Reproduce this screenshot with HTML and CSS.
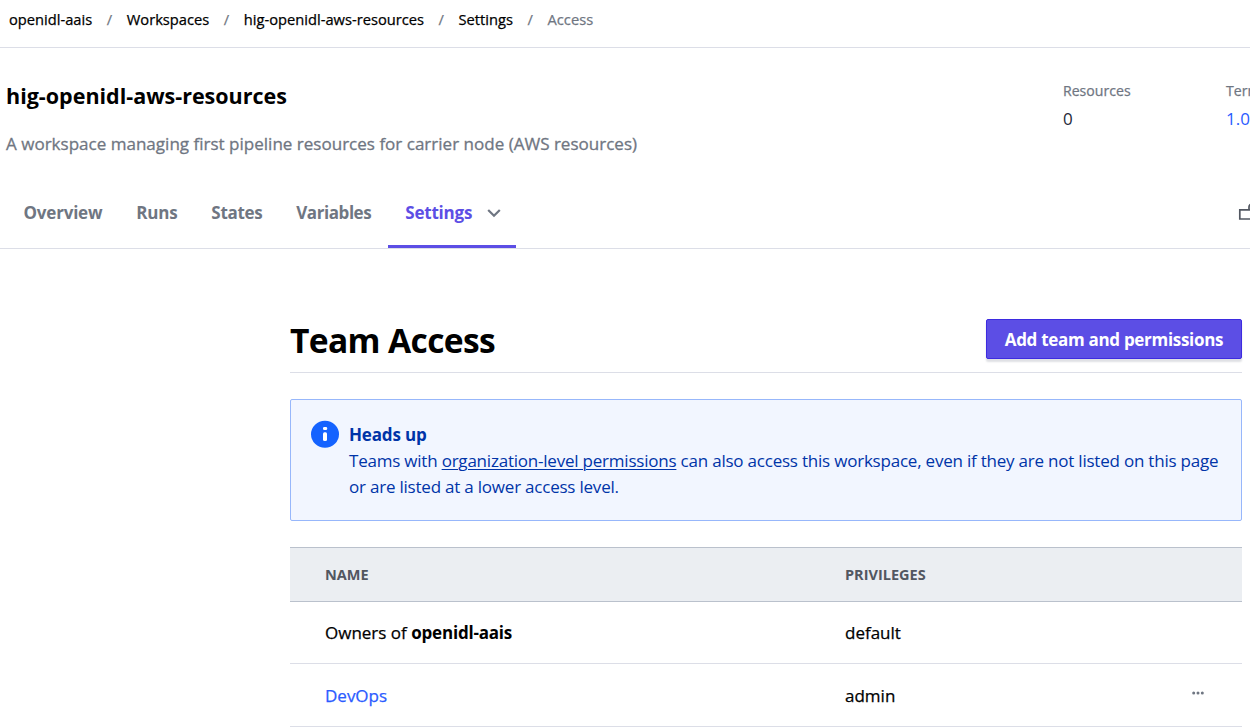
FILE: index.html
```html
<!DOCTYPE html>
<html lang="en">
<head>
<meta charset="utf-8">
<title>Team Access</title>
<link rel="stylesheet" href="styles.css">
</head>
<body>
<nav class="crumbs">
  <a>openidl-aais</a><i>/</i><a>Workspaces</a><i>/</i><a>hig-openidl-aws-resources</a><i>/</i><a>Settings</a><i>/</i><span class="current">Access</span>
</nav>
<header class="workspace">
  <div class="summary">
    <div class="intro">
      <h2>hig-openidl-aws-resources</h2>
      <p>A workspace managing first pipeline resources for carrier node (AWS resources)</p>
    </div>
    <dl class="stat"><dt>Resources</dt><dd>0</dd></dl>
    <dl class="stat"><dt>Terraform version</dt><dd class="link">1.0.2</dd></dl>
  </div>
  <div class="tabs">
    <a class="overview">Overview</a><a class="runs">Runs</a><a class="states">States</a><a class="variables">Variables</a>
    <a class="active"><span>Settings</span><svg width="14" height="10" viewBox="0 0 14 10"><path d="M1.2 2 7 7.8 12.8 2" fill="none" stroke="#6f7682" stroke-width="2.2"/></svg></a>
    <svg class="lock" width="18" height="20" viewBox="0 0 18 20"><path d="M1.8 6.8H15.2V16H1.8ZM11 6.8V4A3 3 0 0 1 17 4" fill="none" stroke="#525761" stroke-width="1.7"/></svg>
  </div>
</header>
<main>
  <div class="title">
    <h1>Team Access</h1>
    <button>Add team and permissions</button>
  </div>
  <section class="alert">
    <svg width="28" height="28" viewBox="0 0 28 28"><ellipse cx="14" cy="14.3" rx="14" ry="13.5" fill="#1563ff"/><rect x="12" y="7" width="4.2" height="3" rx="1.3" fill="#fff"/><rect x="12" y="12.3" width="4" height="8.7" rx="1.5" fill="#fff"/></svg>
    <div>
      <strong>Heads up</strong>
      <p>Teams with <a>organization-level permissions</a> can also access this workspace, even if they are not listed on this page<br>or are listed at a lower access level.</p>
    </div>
  </section>
  <div class="table">
    <div class="row head"><span>NAME</span><span>PRIVILEGES</span></div>
    <div class="row"><span>Owners of <b>openidl-aais</b></span><span>default</span></div>
    <div class="row"><a class="devops">DevOps</a><span>admin</span>
      <svg class="more" width="12" height="4" viewBox="0 0 12 4"><g fill="#6f7682"><circle cx="1.7" cy="2" r="1.5"/><circle cx="6" cy="2" r="1.5"/><circle cx="10.3" cy="2" r="1.5"/></g></svg>
    </div>
  </div>
</main>
</body>
</html>
```
FILE: styles.css
```css
* { box-sizing: border-box; }
body { margin: 0; height: 728px; overflow: hidden; background: #fff; color: #000; font-family: "Open Sans", "Noto Sans", sans-serif; font-size: 17px; }
h1, h2, p, dl, dd { margin: 0; }
.crumbs { display: flex; height: 48px; padding-left: 9px; border-bottom: 1px solid #dcdee7; font-size: 14.7px; line-height: 39px; white-space: nowrap; -webkit-text-stroke: 0.25px; }
.crumbs i { width: 34.5px; text-align: center; font-style: normal; color: #6f7682; }
.crumbs .current { color: #6f7682; }
.workspace { height: 201px; border-bottom: 1px solid #dcdee7; }
.summary { display: flex; height: 130px; padding-left: 6px; white-space: nowrap; }
.intro { width: 1057px; flex: none; }
h2 { padding-top: 32px; font-size: 21.5px; font-weight: 700; line-height: 32px; }
.intro p { padding-top: 19px; font-size: 17.05px; line-height: 26px; color: #6f7682; -webkit-text-stroke: 0.3px; }
.stat { width: 163px; flex: none; padding-top: 31px; }
.stat dt { font-size: 14.1px; line-height: 24px; color: #6f7682; -webkit-text-stroke: 0.25px; }
.stat dd { padding-top: 3px; line-height: 26px; color: #252937; }
.stat .link { color: #2b5bff; }
.tabs { display: flex; height: 70px; padding-left: 6.5px; line-height: 70px; font-weight: 700; color: #6f7682; white-space: nowrap; }
.tabs a { padding: 0 17px; }
.tabs .overview { letter-spacing: -0.2px; }
.tabs .runs { letter-spacing: -0.25px; }
.tabs .states { letter-spacing: -0.33px; }
.tabs .variables { letter-spacing: -0.44px; }
.tabs .active { display: flex; width: 128px; align-items: center; justify-content: space-between; padding-top: 2px; padding-right: 15px; border-bottom: 3px solid #5c4ee5; color: #5c4ee5; letter-spacing: -0.2px; }
.lock { margin: 25px -6px 0 auto; flex: none; }
main { width: 952px; margin-left: 290px; padding-top: 70px; }
.title { display: flex; justify-content: space-between; height: 54px; border-bottom: 1px solid #dcdee7; }
h1 { font-size: 33.6px; font-weight: 700; line-height: 42px; letter-spacing: -0.65px; white-space: nowrap; }
button { width: 256px; height: 40px; padding: 2px 0 0; border: 1px solid #3d2be0; border-radius: 2px; background: #5c4ee5; box-shadow: 0 3px 2px #dfe0e4; color: #fff; font: 700 17px/36px "Open Sans", "Noto Sans", sans-serif; letter-spacing: -0.3px; white-space: nowrap; }
.alert { display: flex; height: 122px; margin-top: 26px; padding: 22px 0 0 20px; gap: 10px; border: 1px solid #97b7fb; border-radius: 2px; background: #f2f6ff; color: #0034a8; line-height: 26px; white-space: nowrap; }
.alert > svg { flex: none; margin-top: -2px; }
.alert strong { display: block; letter-spacing: -0.15px; }
.alert p { letter-spacing: -0.215px; }
.alert a { text-decoration: underline; text-decoration-thickness: 1px; text-underline-offset: 2px; }
.table { margin-top: 26px; border-top: 1px solid #bac1cc; }
.row { display: grid; grid-template-columns: 520px 347px 1fr; align-items: center; height: 62px; padding-left: 35px; border-bottom: 1px solid #dcdee7; -webkit-text-stroke: 0.25px; }
.row:last-child { height: 63px; }
.row b { letter-spacing: -0.2px; -webkit-text-stroke: 0; }
.head { height: 54px; background: #ebeef2; border-color: #bac1cc; color: #525761; font-size: 14.5px; font-weight: 700; -webkit-text-stroke: 0; }
.devops { color: #2b5bff; }
.more { margin-top: -5px; }
```
